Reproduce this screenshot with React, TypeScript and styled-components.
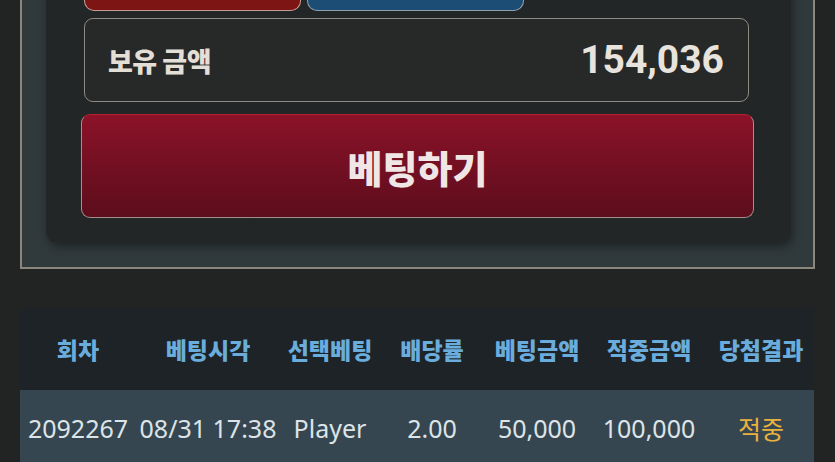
import styled, { createGlobalStyle } from "styled-components";

const GlobalStyle = createGlobalStyle`
  html, body {
    margin: 0;
    padding: 0;
    background: #222423;
    overflow: hidden;
  }
  body {
    font-family: "Noto Sans", "Noto Sans CJK KR", sans-serif;
  }
`;

const Page = styled.div`
  width: 835px;
  height: 462px;
  overflow: hidden;
  background: #222423;
`;

const Panel = styled.div`
  margin: -60px 20px 0;
  background: #30393c;
  border: 2px solid #8b867e;
  border-top: none;
  padding: 0 22px 24px 24px;
`;

const Card = styled.div`
  background: #222626;
  border-radius: 0 0 12px 12px;
  padding: 0 37px 25px 35px;
  box-shadow: 2px 4px 8px rgba(0, 0, 0, 0.35);
  display: flex;
  flex-direction: column;
`;

const PickRow = styled.div`
  display: flex;
  gap: 6px;
  padding: 0 3px;
`;

const PickButton = styled.div<{ $tone: "red" | "blue" }>`
  width: 217px;
  height: 71px;
  box-sizing: border-box;
  border-radius: 0 0 10px 10px;
  border: 1.5px solid ${({ $tone }) => ($tone === "red" ? "#c49a92" : "#8ea0ae")};
  border-top: none;
  background: ${({ $tone }) => ($tone === "red" ? "#7c1513" : "#1c4d74")};
`;

const Balance = styled.div`
  margin: 7px 5px 0 3px;
  height: 84px;
  box-sizing: border-box;
  border: 1.5px solid #8e8a82;
  border-radius: 9px;
  background: #272828;
  display: flex;
  align-items: center;
  justify-content: space-between;
  padding: 0 24px 0 23px;
`;

const BalanceLabel = styled.span`
  font-family: "Noto Sans CJK KR", sans-serif;
  font-weight: 900;
  font-size: 27px;
  color: #e3ded6;
  letter-spacing: -0.5px;
`;

const BalanceValue = styled.span`
  font-family: Roboto, "Noto Sans", sans-serif;
  font-weight: 700;
  font-size: 39px;
  color: #e8e4dd;
`;

const BetButton = styled.button`
  margin-top: 12px;
  height: 104px;
  border-radius: 9px;
  border: 1.5px solid #a68e8c;
  border-top-color: #b8222e;
  background: linear-gradient(#8b1229, #5c0d1c);
  font-family: "Noto Sans CJK KR", sans-serif;
  font-weight: 900;
  font-size: 38px;
  color: #f1e6e6;
  cursor: pointer;
  padding: 0;
`;

const Table = styled.table`
  margin: 39px 0 0 20px;
  width: 794px;
  border-collapse: collapse;
  table-layout: fixed;
`;

const HeadCell = styled.th`
  height: 82px;
  background: #1e2327;
  color: #6aaddd;
  font-family: "Noto Sans CJK KR", sans-serif;
  font-weight: 900;
  font-size: 23px;
  text-align: center;
  padding: 0;
  white-space: nowrap;
`;

const Cell = styled.td<{ $win?: boolean }>`
  height: 76px;
  background: #364650;
  color: ${({ $win }) => ($win ? "#e9b23f" : "#dde4e8")};
  font-family: "Noto Sans", "Noto Sans CJK KR", sans-serif;
  font-size: 25px;
  text-align: center;
  padding: 0 0 12px;
  white-space: nowrap;
`;

const columns = [
  { label: "회차", width: 116 },
  { label: "베팅시각", width: 144 },
  { label: "선택베팅", width: 100 },
  { label: "배당률", width: 104 },
  { label: "베팅금액", width: 106 },
  { label: "적중금액", width: 118 },
  { label: "당첨결과", width: 106 },
];

const rows = [
  ["2092267", "08/31 17:38", "Player", "2.00", "50,000", "100,000", "적중"],
];

const App = () => {
  return (
    <Page>
      <GlobalStyle />
      <Panel>
        <Card>
          <PickRow>
            <PickButton $tone="red" />
            <PickButton $tone="blue" />
          </PickRow>
          <Balance>
            <BalanceLabel>보유 금액</BalanceLabel>
            <BalanceValue>154,036</BalanceValue>
          </Balance>
          <BetButton type="button">베팅하기</BetButton>
        </Card>
      </Panel>
      <Table>
        <colgroup>
          {columns.map((c) => (
            <col key={c.label} style={{ width: c.width }} />
          ))}
        </colgroup>
        <thead>
          <tr>
            {columns.map((c) => (
              <HeadCell key={c.label}>{c.label}</HeadCell>
            ))}
          </tr>
        </thead>
        <tbody>
          {rows.map((r) => (
            <tr key={r[0]}>
              {r.map((v, i) => (
                <Cell key={i} $win={i === 6}>
                  {v}
                </Cell>
              ))}
            </tr>
          ))}
        </tbody>
      </Table>
    </Page>
  );
};

export default App;
